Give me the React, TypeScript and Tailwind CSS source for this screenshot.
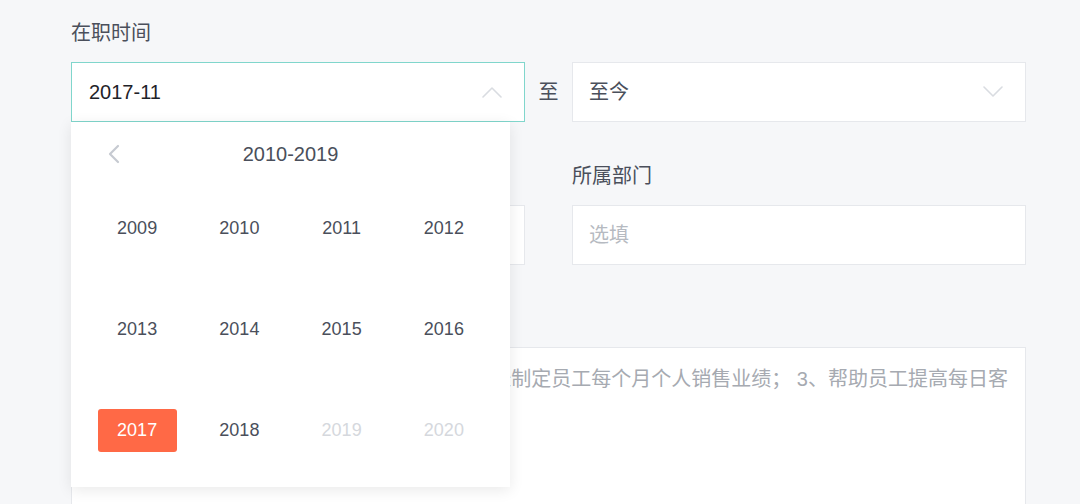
import React from "react";

const font = { fontFamily: '"Liberation Sans", "Noto Sans CJK SC", sans-serif' };

const years = [
  { y: "2009" }, { y: "2010" }, { y: "2011" }, { y: "2012" },
  { y: "2013" }, { y: "2014" }, { y: "2015" }, { y: "2016" },
  { y: "2017", active: true }, { y: "2018" }, { y: "2019", disabled: true }, { y: "2020", disabled: true },
];

function Chevron({ up }: { up?: boolean }) {
  return (
    <svg width="20" height="12" viewBox="0 0 20 12" fill="none">
      <path
        d={up ? "M1 11 L10 2 L19 11" : "M1 1 L10 10 L19 1"}
        stroke="#d9dce1"
        strokeWidth="1.6"
        strokeLinecap="round"
        strokeLinejoin="round"
      />
    </svg>
  );
}

function YearPanel() {
  return (
    <div className="absolute left-0 top-full z-10 w-[439px] h-[365px] bg-white shadow-[0_3px_14px_rgba(0,0,0,0.09)]">
      <div className="relative pt-[20px] h-[44px]">
        <svg className="absolute left-[36px] top-[22px]" width="14" height="20" viewBox="0 0 14 20" fill="none">
          <path d="M11 2 L3 10 L11 18" stroke="#c6cad1" strokeWidth="2.2" strokeLinecap="round" strokeLinejoin="round" />
        </svg>
        <div className="text-center text-[20px] leading-[24px] text-[#4a4f5b]">2010-2019</div>
      </div>
      <div className="mt-[12px] px-[15px] grid grid-cols-4 grid-rows-[101px_101px_101px]">
        {years.map((it) => (
          <div key={it.y} className="flex items-center justify-center">
            {it.active ? (
              <div className="w-[79px] h-[43px] rounded-[3px] bg-[#ff6946] text-white text-[18px] flex items-center justify-center">
                {it.y}
              </div>
            ) : (
              <span className={`text-[18px] ${it.disabled ? "text-[#d5d8dd]" : "text-[#4a4f5b]"}`}>{it.y}</span>
            )}
          </div>
        ))}
      </div>
    </div>
  );
}

export default function App() {
  return (
    <div className="w-[1080px] h-[504px] overflow-hidden bg-[#f6f7f9] pl-[71px] pt-[21px]" style={font}>
      <div className="w-[955px]">
        {/* row 1 */}
        <div className="h-[24px] leading-[24px] text-[20px] text-[#4a4f5b] mb-[17px]">在职时间</div>
        <div className="flex items-center">
          <div className="relative w-[454px]">
            <div className="h-[60px] bg-white border border-[#80d6cc] flex items-center justify-between pl-[17px] pr-[22px]">
              <span className="text-[20px] text-[#1f2329]">2017-11</span>
              <Chevron up />
            </div>
            <YearPanel />
          </div>
          <div className="w-[47px] text-center text-[20px] text-[#4a4f5b]">至</div>
          <div className="w-[454px] h-[60px] bg-white border border-[#e6e8ec] flex items-center justify-between pl-[16px] pr-[22px]">
            <span className="text-[20px] text-[#4a4f5b]">至今</span>
            <Chevron />
          </div>
        </div>

        {/* row 2 */}
        <div className="mt-[42px] flex gap-[47px]">
          <div className="w-[454px]">
            <div className="h-[24px] mb-[17px]" />
            <div className="h-[60px] bg-white border border-[#e6e8ec]" />
          </div>
          <div className="w-[454px]">
            <div className="h-[24px] leading-[24px] text-[20px] text-[#4a4f5b] mb-[17px]">所属部门</div>
            <div className="h-[60px] bg-white border border-[#e6e8ec] flex items-center pl-[16px]">
              <span className="text-[20px] text-[#b6bac1]">选填</span>
            </div>
          </div>
        </div>

        {/* row 3 */}
        <div className="mt-[41px]">
          <div className="h-[24px] mb-[17px]" />
          <div className="h-[180px] bg-white border border-[#e6e8ec] pl-[17px] pt-[16px] text-[20px] leading-[30px] text-[#a6aab1]">
            <div className="whitespace-nowrap">1、负责门店日常运营与管理工作；2、协助店长制定员工每个月个人销售业绩； 3、帮助员工提高每日客</div>
          </div>
        </div>
      </div>
    </div>
  );
}
